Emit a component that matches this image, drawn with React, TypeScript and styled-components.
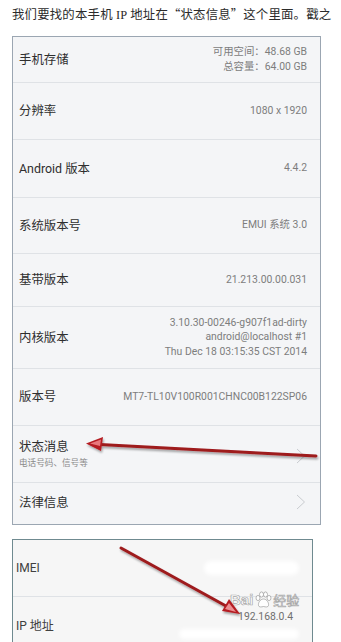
import styled, { createGlobalStyle } from "styled-components";

const GlobalStyle = createGlobalStyle`
  html, body {
    margin: 0;
    padding: 0;
    background: #ffffff;
  }
  * { box-sizing: border-box; }
`;

const Page = styled.div`
  position: relative;
  width: 341px;
  height: 642px;
  overflow: hidden;
  background: #ffffff;
`;

const Intro = styled.div`
  height: 36px;
  padding: 6px 0 0 12px;
  font-family: "Liberation Serif", "Noto Sans CJK SC", serif;
  font-size: 12.4px;
  line-height: 16px;
  letter-spacing: 0.2px;
  color: #2b2b2b;
  white-space: nowrap;
`;

const Quote = styled.span`
  font-family: "Noto Sans CJK SC", sans-serif;
  letter-spacing: 0;
`;

const Panel = styled.div<{ $w: number; $border: string; $bg: string }>`
  margin-left: 12px;
  width: ${(p) => p.$w}px;
  background: ${(p) => p.$bg};
  border: 1.5px solid ${(p) => p.$border};
  display: flex;
  flex-direction: column;
`;

const Row = styled.div<{ $h: number; $align?: string; $pt?: number; $last?: boolean }>`
  height: ${(p) => p.$h}px;
  display: flex;
  align-items: ${(p) => p.$align || "center"};
  justify-content: space-between;
  padding: ${(p) => p.$pt || 0}px 13px 0 6px;
  border-bottom: ${(p) => (p.$last ? "none" : "1px solid #dfe2e6")};
`;

const Title = styled.div`
  font-family: Roboto, "Noto Sans CJK SC", sans-serif;
  font-size: 12.4px;
  line-height: 18px;
  color: #2e2e2e;
  white-space: nowrap;
`;

const Sub = styled.div`
  font-family: Roboto, "Noto Sans CJK SC", sans-serif;
  font-size: 8.6px;
  line-height: 14px;
  color: #8a8a8a;
`;

const Stack = styled.div<{ $pt?: number }>`
  display: flex;
  flex-direction: column;
  padding-top: ${(p) => p.$pt || 0}px;
`;

const Value = styled.div`
  font-family: Roboto, "Noto Sans CJK SC", sans-serif;
  font-size: 10.4px;
  line-height: 14.5px;
  color: #7d7d7d;
  text-align: right;
  white-space: nowrap;
`;

const Chevron = styled.svg`
  width: 10px;
  height: 16px;
  margin-right: 1px;
`;

const SmallRow = styled(Row)`
  padding-left: 3px;
`;

const Label = styled.div<{ $mt?: number }>`
  font-family: Roboto, "Noto Sans CJK SC", sans-serif;
  font-size: 12px;
  line-height: 18px;
  color: #404040;
  margin-top: ${(p) => p.$mt || 0}px;
`;

const Blur = styled.div<{ $w: number; $h: number }>`
  width: ${(p) => p.$w}px;
  height: ${(p) => p.$h}px;
  background: #ffffff;
  border-radius: 8px;
  filter: blur(2px);
`;

const IpValue = styled.div`
  display: flex;
  flex-direction: column;
  align-items: flex-end;
  gap: 6px;
  padding-top: 14px;
`;

const IpText = styled.div`
  font-family: Roboto, sans-serif;
  font-size: 10.4px;
  line-height: 12px;
  color: #6f6f6f;
  margin-right: 6px;
`;

const Spacer = styled.div`
  height: 14px;
`;

const Watermark = styled.div`
  position: absolute;
  left: 230px;
  top: 590px;
  display: flex;
  align-items: center;
  gap: 1px;
  font-family: "Liberation Sans", "Noto Sans CJK SC", sans-serif;
  font-size: 15px;
  font-weight: bold;
  color: rgba(255, 255, 255, 0.9);
  -webkit-text-stroke: 0.7px rgba(140, 140, 140, 0.75);
  pointer-events: none;
`;

const WaterSmall = styled.span`
  font-size: 13px;
  font-weight: normal;
`;

const Overlay = styled.svg`
  position: absolute;
  left: 0;
  top: 0;
  width: 341px;
  height: 642px;
  pointer-events: none;
`;

const rows = [
  { title: "分辨率", h: 57, values: ["1080 x 1920"] },
  { title: "Android 版本", h: 58, values: ["4.4.2"] },
  { title: "系统版本号", h: 56, values: ["EMUI 系统 3.0"] },
  { title: "基带版本", h: 53, values: ["21.213.00.00.031"] },
  {
    title: "内核版本",
    h: 62,
    values: [
      "3.10.30-00246-g907f1ad-dirty",
      "android@localhost #1",
      "Thu Dec 18 03:15:35 CST 2014",
    ],
  },
  { title: "版本号", h: 57, values: ["MT7-TL10V100R001CHNC00B122SP06"] },
];

const ChevronIcon = () => (
  <Chevron viewBox="0 0 10 16">
    <path d="M1 1 L8.5 8 L1 15" fill="none" stroke="#c9ccd0" strokeWidth="1" />
  </Chevron>
);

export default function App() {
  return (
    <Page>
      <GlobalStyle />
      <Intro>
        我们要找的本手机 IP 地址在<Quote>“</Quote>状态信息<Quote>”</Quote>这个里面。戳之
      </Intro>

      <Panel $w={309} $border="#9ba6b2" $bg="#f4f5f7">
        <Row $h={46}>
          <Title>手机存储</Title>
          <Stack>
            <Value>可用空间：48.68 GB</Value>
            <Value>总容量：64.00 GB</Value>
          </Stack>
        </Row>
        {rows.map((r) => (
          <Row key={r.title} $h={r.h}>
            <Title>{r.title}</Title>
            <Stack>
              {r.values.map((v) => (
                <Value key={v}>{v}</Value>
              ))}
            </Stack>
          </Row>
        ))}
        <Row $h={57} $align="flex-start" $pt={12}>
          <Stack>
            <Title>状态消息</Title>
            <Sub>电话号码、信号等</Sub>
          </Stack>
          <Stack $pt={10}>
            <ChevronIcon />
          </Stack>
        </Row>
        <Row $h={41} $align="flex-start" $pt={11} $last>
          <Title>法律信息</Title>
          <ChevronIcon />
        </Row>
      </Panel>

      <Spacer />

      <Panel $w={301} $border="#6f8a90" $bg="#f6f6f6">
        <SmallRow $h={57}>
          <Label>IMEI</Label>
          <Blur $w={95} $h={14} />
        </SmallRow>
        <SmallRow $h={60} $align="flex-start" $last>
          <Label $mt={20}>IP 地址</Label>
          <IpValue>
            <IpText>192.168.0.4</IpText>
            <Blur $w={120} $h={10} />
          </IpValue>
        </SmallRow>
      </Panel>

      <Watermark>
        Bai
        <svg width="18" height="18" viewBox="0 0 18 18">
          <g fill="rgba(255,255,255,0.9)" stroke="rgba(140,140,140,0.75)" strokeWidth="0.8">
            <ellipse cx="4" cy="7" rx="2" ry="2.6" />
            <ellipse cx="7.5" cy="3.5" rx="2" ry="2.6" />
            <ellipse cx="11.5" cy="3.5" rx="2" ry="2.6" />
            <ellipse cx="15" cy="7" rx="2" ry="2.6" />
            <path d="M9.5 8 C6 8 4 12 4.5 14.5 C5 16.5 7.5 16 9.5 15.5 C11.5 16 14 16.5 14.5 14.5 C15 12 13 8 9.5 8 Z" />
          </g>
        </svg>
        <WaterSmall>经验</WaterSmall>
      </Watermark>

      <Overlay viewBox="0 0 341 642">
        <defs>
          <filter id="sh" x="-10%" y="-50%" width="120%" height="200%">
            <feGaussianBlur in="SourceAlpha" stdDeviation="1.2" />
            <feOffset dx="1" dy="1.5" />
            <feComponentTransfer>
              <feFuncA type="linear" slope="0.35" />
            </feComponentTransfer>
            <feMerge>
              <feMergeNode />
              <feMergeNode in="SourceGraphic" />
            </feMerge>
          </filter>
        </defs>
        <g filter="url(#sh)">
          <line x1="316" y1="456" x2="100" y2="444.5" stroke="#9e1a1e" strokeWidth="3" strokeLinecap="round" />
          <polygon points="86,443.5 103,437 101,451" fill="#b51d22" />
          <polygon points="90,443.6 101,439.5 100,446" fill="#e8787c" />
        </g>
        <g filter="url(#sh)">
          <line x1="121" y1="548" x2="226" y2="606" stroke="#9e1a1e" strokeWidth="3" strokeLinecap="round" />
          <polygon points="240,614 222,611 229,599" fill="#b51d22" />
          <polygon points="236,612 225,609 229,603" fill="#ec8f92" />
        </g>
      </Overlay>
    </Page>
  );
}
